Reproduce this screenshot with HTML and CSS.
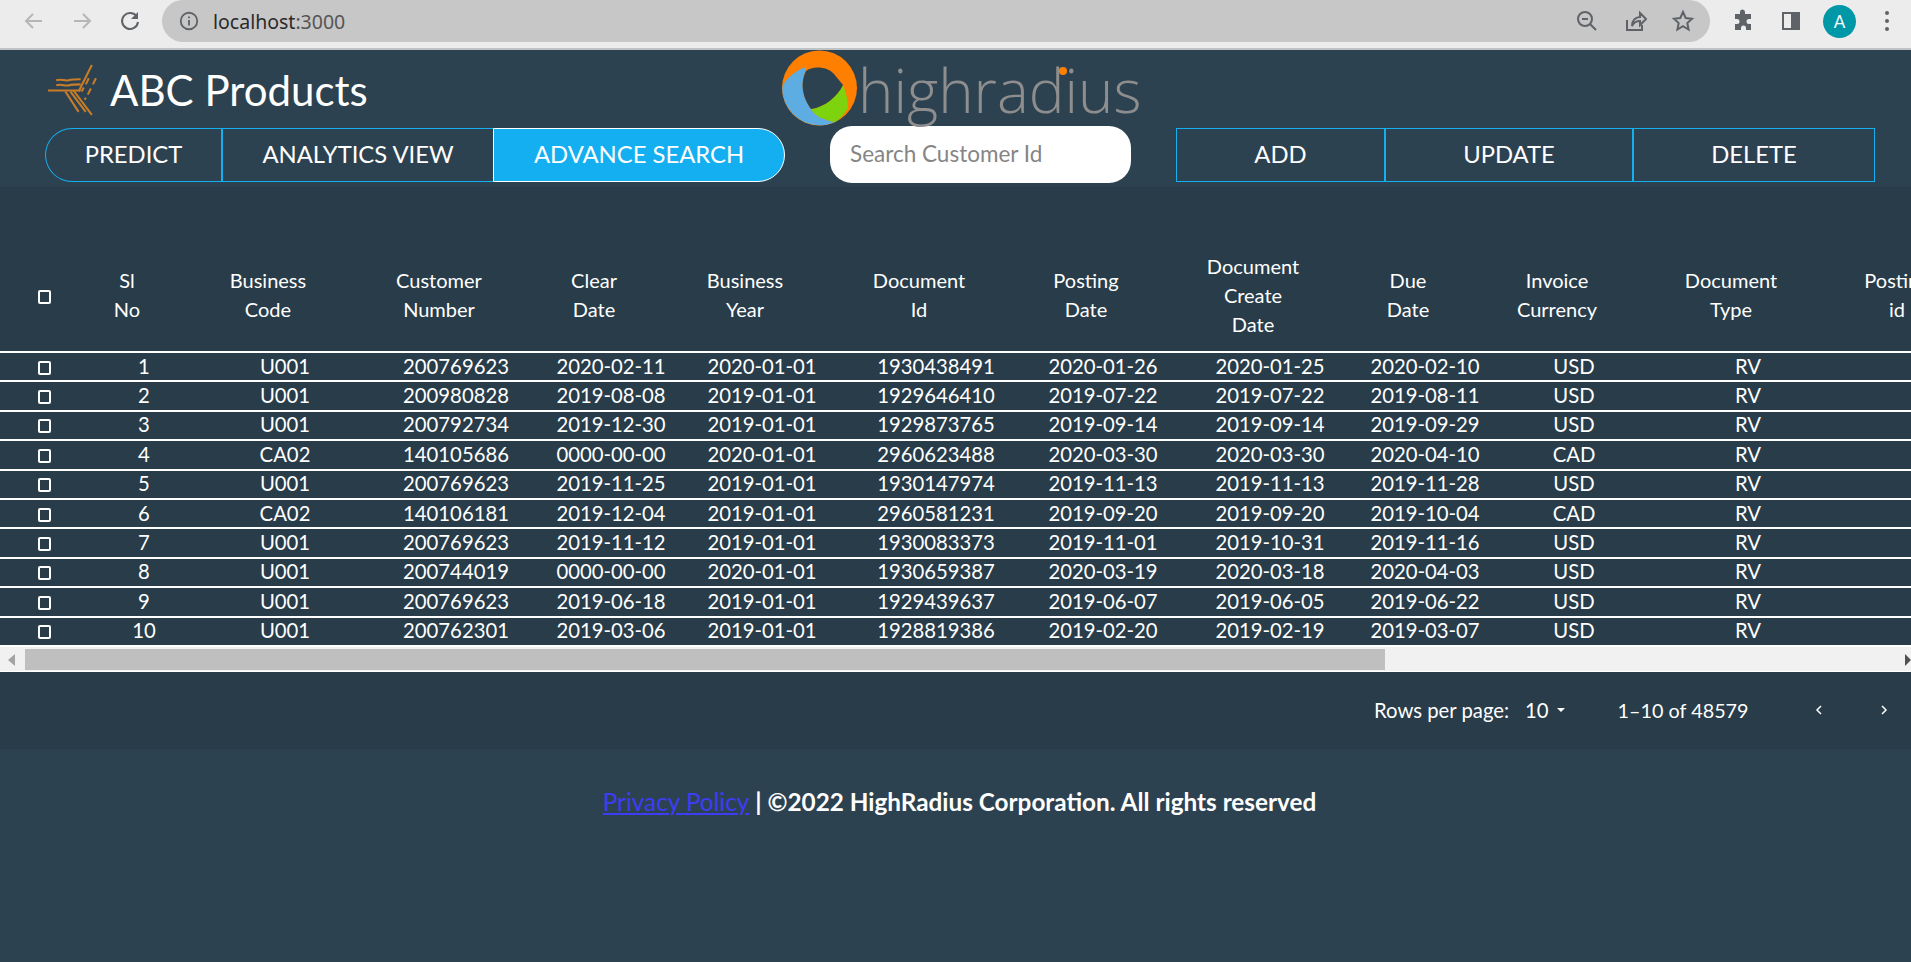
FILE: index.html

```html
<!DOCTYPE html>
<html lang="en">
<head>
  <meta name="viewport" content="width=device-width, initial-scale=1">
  <title>ABC Products</title>
  <link rel="stylesheet" href="styles.css">
</head>
<body>
  <div class="browser-bar">
    <div class="nav-icons">
      <svg class="ico dim" viewBox="0 0 24 24"><path d="M20 12H5M11 5l-7 7 7 7"/></svg>
      <svg class="ico dim" viewBox="0 0 24 24"><path d="M4 12h15M13 5l7 7-7 7"/></svg>
      <svg class="ico" viewBox="0 0 24 24"><path d="M19 8a8 8 0 1 0 1 5"/><path class="solid" d="M20 3v7h-7z"/></svg>
    </div>
    <div class="url-pill">
      <svg class="ico info" viewBox="0 0 24 24"><circle cx="12" cy="12" r="9"/><path d="M12 11v6M12 7v2"/></svg>
      <span class="url">localhost<span class="url-port">:3000</span></span>
      <div class="pill-icons">
        <svg class="ico" viewBox="0 0 24 24"><circle cx="10" cy="10" r="7"/><path d="M15 15l6 6M7 10h6"/></svg>
        <svg class="ico" viewBox="0 0 24 24"><path d="M4 11v10h15v-5"/><path d="M9 17c0-6 4-9 8-9V4l6 6-6 6v-4c-3 0-6 1-8 5z"/></svg>
        <svg class="ico" viewBox="0 0 24 24"><path d="M12 3l2.7 6 6.3.7-4.7 4.3 1.3 6.500L12 17.200l-5.600 3.300 1.300-6.500L3 9.700 9.300 9z"/></svg>
      </div>
    </div>
    <div class="ext-icons">
      <svg class="ico solid-ico" viewBox="0 0 24 24"><path d="M9 3a2.500 2.500 0 0 1 5 0v2h6v5h-2a2.500 2.500 0 0 0 0 5h2v6h-5v-2a2.500 2.500 0 0 0-5 0v2H4v-6h2a2.500 2.500 0 0 0 0-5H4V5h5z"/></svg>
      <svg class="ico" viewBox="0 0 24 24"><path d="M4 4h16v16H4z"/><path class="panel" d="M13 4h7v16h-7z"/></svg>
      <span class="avatar">A</span>
      <span class="dots"><i></i><i></i><i></i></span>
    </div>
  </div>

  <header class="top">
    <div class="brand-row">
      <div class="brand">
        <svg class="brand-mark" viewBox="0 0 48 51">
          <path d="M0 26h32"/>
          <path d="M8 21c5-2 8 1 12 0s7-1 12-1"/>
          <path d="M8 16c5-2 8 1 12 0s7-1 12-1"/>
          <path d="M43 1L30 27"/>
          <path d="M47 14l-3 6M42 24l-3 6M37 33l-1 2"/>
          <path d="M40 14l-3 6M35 23l-2 4"/>
          <path d="M17 27l13 20M22 27l15 20M25 26l18 24"/>
        </svg>
        <span class="brand-name">ABC Products</span>
      </div>
      <div class="hr-logo">
        <svg class="hr-ring" viewBox="0 0 76 76">
          <circle cx="37.500" cy="38" r="37.500" fill="#ff7f00"/>
          <path d="M24 17C10 22 1 32 .3 38A37.500 37.500 0 0 0 53 72C42 70 33 66 29 59 22 50 17 35 24 20z" fill="#5dade2"/>
          <path d="M61 35c3 8 5 15 5 23-4 6-8 11-13 14-11-2-20-6-24-13 14-2 26-12 32-24z" fill="#7ed30f"/>
          <path d="M24 21c6-5 21-5 28 3l9 11c-6 12-18 22-32 24-7-9-12-24-5-38z" fill="#2d4250"/>
        </svg>
        <span class="hr-text">highradius</span>
        <span class="hr-dot"></span>
      </div>
    </div>
    <div class="action-row">
      <div class="tabs">
        <button class="tab tab-predict">PREDICT</button>
        <button class="tab tab-analytics">ANALYTICS VIEW</button>
        <button class="tab tab-advance">ADVANCE SEARCH</button>
      </div>
      <input class="search" type="text" placeholder="Search Customer Id">
      <div class="crud">
        <button class="crud-btn crud-add">ADD</button>
        <button class="crud-btn crud-update">UPDATE</button>
        <button class="crud-btn crud-delete">DELETE</button>
      </div>
    </div>
  </header>

  <main class="grid-area">
    <div class="table-wrap">
      <table class="data-table">
        <colgroup>
          <col class="c-check"><col class="c-sl"><col class="c-biz"><col class="c-cust"><col class="c-clear">
          <col class="c-year"><col class="c-doc"><col class="c-post"><col class="c-create"><col class="c-due">
          <col class="c-cur"><col class="c-type"><col class="c-postid">
        </colgroup>
        <thead>
          <tr>
            <th><input class="cb" type="checkbox"></th>
            <th>Sl<br>No</th>
            <th>Business<br>Code</th>
            <th>Customer<br>Number</th>
            <th>Clear<br>Date</th>
            <th>Business<br>Year</th>
            <th>Document<br>Id</th>
            <th>Posting<br>Date</th>
            <th>Document<br>Create<br>Date</th>
            <th>Due<br>Date</th>
            <th>Invoice<br>Currency</th>
            <th>Document<br>Type</th>
            <th>Posting<br>id</th>
          </tr>
        </thead>
        <tbody>
          <tr><td><input class="cb" type="checkbox"></td><td>1</td><td>U001</td><td>200769623</td><td>2020-02-11</td><td>2020-01-01</td><td>1930438491</td><td>2020-01-26</td><td>2020-01-25</td><td>2020-02-10</td><td>USD</td><td>RV</td><td></td></tr>
          <tr><td><input class="cb" type="checkbox"></td><td>2</td><td>U001</td><td>200980828</td><td>2019-08-08</td><td>2019-01-01</td><td>1929646410</td><td>2019-07-22</td><td>2019-07-22</td><td>2019-08-11</td><td>USD</td><td>RV</td><td></td></tr>
          <tr><td><input class="cb" type="checkbox"></td><td>3</td><td>U001</td><td>200792734</td><td>2019-12-30</td><td>2019-01-01</td><td>1929873765</td><td>2019-09-14</td><td>2019-09-14</td><td>2019-09-29</td><td>USD</td><td>RV</td><td></td></tr>
          <tr><td><input class="cb" type="checkbox"></td><td>4</td><td>CA02</td><td>140105686</td><td>0000-00-00</td><td>2020-01-01</td><td>2960623488</td><td>2020-03-30</td><td>2020-03-30</td><td>2020-04-10</td><td>CAD</td><td>RV</td><td></td></tr>
          <tr><td><input class="cb" type="checkbox"></td><td>5</td><td>U001</td><td>200769623</td><td>2019-11-25</td><td>2019-01-01</td><td>1930147974</td><td>2019-11-13</td><td>2019-11-13</td><td>2019-11-28</td><td>USD</td><td>RV</td><td></td></tr>
          <tr><td><input class="cb" type="checkbox"></td><td>6</td><td>CA02</td><td>140106181</td><td>2019-12-04</td><td>2019-01-01</td><td>2960581231</td><td>2019-09-20</td><td>2019-09-20</td><td>2019-10-04</td><td>CAD</td><td>RV</td><td></td></tr>
          <tr><td><input class="cb" type="checkbox"></td><td>7</td><td>U001</td><td>200769623</td><td>2019-11-12</td><td>2019-01-01</td><td>1930083373</td><td>2019-11-01</td><td>2019-10-31</td><td>2019-11-16</td><td>USD</td><td>RV</td><td></td></tr>
          <tr><td><input class="cb" type="checkbox"></td><td>8</td><td>U001</td><td>200744019</td><td>0000-00-00</td><td>2020-01-01</td><td>1930659387</td><td>2020-03-19</td><td>2020-03-18</td><td>2020-04-03</td><td>USD</td><td>RV</td><td></td></tr>
          <tr><td><input class="cb" type="checkbox"></td><td>9</td><td>U001</td><td>200769623</td><td>2019-06-18</td><td>2019-01-01</td><td>1929439637</td><td>2019-06-07</td><td>2019-06-05</td><td>2019-06-22</td><td>USD</td><td>RV</td><td></td></tr>
          <tr><td><input class="cb" type="checkbox"></td><td>10</td><td>U001</td><td>200762301</td><td>2019-03-06</td><td>2019-01-01</td><td>1928819386</td><td>2019-02-20</td><td>2019-02-19</td><td>2019-03-07</td><td>USD</td><td>RV</td><td></td></tr>
        </tbody>
      </table>
    </div>

    <div class="scrollbar">
      <span class="arrow arrow-left"></span>
      <span class="thumb"></span>
      <span class="arrow arrow-right"></span>
    </div>

    <div class="pagination">
      <span class="rows-label">Rows per page:</span>
      <span class="rows-value">10</span>
      <span class="caret"></span>
      <span class="range">1–10 of 48579</span>
      <svg class="chev chev-prev" viewBox="0 0 10 12"><path d="M7 2L3 6l4 4"/></svg>
      <svg class="chev chev-next" viewBox="0 0 10 12"><path d="M3 2l4 4-4 4"/></svg>
    </div>
  </main>

  <footer class="foot">
    <a href="#">Privacy Policy</a> | ©2022 HighRadius Corporation. All rights reserved
  </footer>
</body>
</html>
```

FILE: styles.css

```css
* {
  box-sizing: border-box;
}
html, body {
  margin: 0;
  height: 100%;
}
body {
  background: #2d4250;
  color: #fff;
  font-family: Lato, "Noto Sans", sans-serif;
  overflow: hidden;
}

/* browser chrome */
.browser-bar {
  height: 50px;
  background: #ececec;
  border-bottom: 2px solid #bfc2c5;
  display: flex;
  align-items: flex-start;
}
.nav-icons {
  width: 162px;
  height: 42px;
  display: flex;
  align-items: center;
  gap: 24px;
  padding-left: 22px;
}
.ico {
  width: 24px;
  height: 24px;
  fill: none;
  stroke: #5f6368;
  stroke-width: 2;
}
.ico.dim {
  stroke: #b4b6b8;
}
.ico .solid {
  fill: #5f6368;
  stroke: none;
}
.ico .panel {
  fill: #5f6368;
}
.solid-ico {
  fill: #5f6368;
  stroke: none;
}
.url-pill {
  width: 1548px;
  height: 42px;
  background: #c7c7c7;
  border-radius: 21px;
  display: flex;
  align-items: center;
  padding-left: 16px;
}
.ico.info {
  width: 22px;
  height: 22px;
}
.url {
  font-family: "Noto Sans", sans-serif;
  font-size: 19.5px;
  color: #2a2a2a;
  margin-left: 13px;
}
.url-port {
  color: #555;
}
.pill-icons {
  margin-left: auto;
  margin-right: 15px;
  display: flex;
  gap: 24px;
}
.ext-icons {
  flex: 1;
  height: 42px;
  display: flex;
  align-items: center;
  padding-left: 21px;
}
.ext-icons .ico + .ico {
  margin-left: 24px;
}
.avatar {
  width: 33px;
  height: 33px;
  margin-left: 20px;
  border-radius: 50%;
  background: #0097a7;
  color: #fff;
  font-size: 17px;
  display: flex;
  align-items: center;
  justify-content: center;
}
.dots {
  margin-left: 29px;
  display: flex;
  flex-direction: column;
  gap: 4px;
}
.dots i {
  width: 4px;
  height: 4px;
  border-radius: 50%;
  background: #5f6368;
}

/* header */
.top {
  height: 137px;
  background: #2d4250;
}
.brand-row {
  height: 76px;
  display: flex;
  align-items: flex-start;
}
.brand {
  width: 782px;
  padding: 14px 0 0 48px;
  display: flex;
  align-items: center;
  gap: 13px;
}
.brand-mark {
  width: 49px;
  height: 52px;
  fill: none;
  stroke: #c97d28;
  stroke-width: 2;
}
.brand-name {
  font-size: 42px;
  line-height: 52px;
}
.hr-logo {
  position: relative;
  display: flex;
  align-items: flex-start;
}
.hr-ring {
  width: 76px;
  height: 76px;
  flex: none;
}
.hr-text {
  margin: -2px 0 0;
  font-family: "Open Sans", sans-serif;
  font-weight: 300;
  font-size: 60px;
  line-height: 84px;
  color: #8e8e8e;
}
.hr-dot {
  position: absolute;
  left: 277px;
  top: 17px;
  width: 8px;
  height: 8px;
  border-radius: 50%;
  background: #ff7f00;
}
.action-row {
  display: flex;
  align-items: center;
  padding-left: 45px;
  height: 57px;
}
.tabs, .crud {
  display: flex;
  height: 54px;
}
.tab, .crud-btn {
  background: transparent;
  color: #fff;
  font-family: Lato, sans-serif;
  font-size: 23.8px;
  border: 1px solid #14aff1;
  padding: 0 0 2px;
}
.tab-predict {
  width: 178px;
  border-radius: 27px 0 0 27px;
}
.tab-analytics {
  width: 270px;
  border-left: 0;
  border-right: 0;
}
.tab-advance {
  width: 292px;
  border: 1px solid #fff;
  border-radius: 0 27px 27px 0;
  background: #14aff1;
}
.tab-predict, .crud-add, .crud-update {
  border-right-width: 2px;
}
.search {
  width: 301px;
  height: 57px;
  margin-left: 45px;
  border: 0;
  border-radius: 22px;
  background: #fff;
  padding: 0 20px 2px;
  font-family: Lato, sans-serif;
  font-size: 22.5px;
}
.search::placeholder {
  color: #858585;
  opacity: 1;
}
.crud {
  margin-left: 45px;
}
.crud-add {
  width: 210px;
}
.crud-update {
  width: 248px;
  border-left: 0;
}
.crud-delete {
  width: 241px;
  border-left: 0;
}

/* table */
.grid-area {
  height: 562px;
  background: #283c4a;
  padding-top: 49px;
}
.table-wrap {
  overflow: hidden;
}
.data-table {
  width: 1992px;
  table-layout: fixed;
  border-collapse: separate;
  border-spacing: 0;
}
.c-check { width: 88px; }
.c-sl { width: 112px; }
.c-biz { width: 170px; }
.c-cust { width: 172px; }
.c-clear { width: 138px; }
.c-year { width: 164px; }
.c-doc { width: 184px; }
.c-post { width: 150px; }
.c-create { width: 184px; }
.c-due { width: 126px; }
.c-cur { width: 172px; }
.c-type { width: 176px; }
.c-postid { width: 156px; }
.data-table th {
  height: 117px;
  padding: 3px 34px 0 0;
  font-size: 20px;
  font-weight: 400;
  line-height: 29px;
  text-align: center;
  white-space: nowrap;
  border-bottom: 2px solid #fff;
}
.data-table th:first-child {
  padding: 6px 0 0;
}
.data-table td {
  height: 29.4px;
  padding: 0 0 2px;
  font-size: 20.3px;
  line-height: 24px;
  text-align: center;
  white-space: nowrap;
  border-bottom: 2px solid #fff;
}
.data-table td:first-child {
  padding: 2px 0 0;
}
.cb {
  appearance: none;
  display: block;
  width: 13px;
  height: 14px;
  margin: 0 auto;
  border: 2px solid #fff;
  border-radius: 2px;
  background: transparent;
}

.scrollbar {
  height: 25px;
  background: #f1f1f1;
  border-bottom: 1px solid #fff;
  display: flex;
  align-items: center;
  padding: 1px 0 0 25px;
  position: relative;
}
.thumb {
  width: 1360px;
  height: 21px;
  background: #bfbfbf;
}
.arrow {
  position: absolute;
  top: 7px;
  width: 0;
  height: 0;
  border-top: 6px solid transparent;
  border-bottom: 6px solid transparent;
}
.arrow-left {
  left: 8px;
  border-right: 7px solid #a3a3a3;
}
.arrow-right {
  right: 0;
  border-left: 6px solid #505050;
}

.pagination {
  height: 77px;
  display: flex;
  align-items: center;
  padding-left: 1374px;
  font-size: 20.3px;
}
.rows-value {
  margin-left: 16px;
}
.caret {
  margin-left: 8px;
  border-left: 4px solid transparent;
  border-right: 4px solid transparent;
  border-top: 4px solid #fff;
}
.range {
  margin-left: 53px;
  font-size: 19.8px;
}
.chev {
  width: 10px;
  height: 12px;
  fill: none;
  stroke: #fff;
  stroke-width: 1.5;
}
.chev-prev {
  margin-left: 65px;
}
.chev-next {
  margin-left: 55px;
}

/* footer */
.foot {
  padding: 38px 0 0 8px;
  text-align: center;
  font-size: 24.3px;
  font-weight: 700;
  line-height: 30px;
}
.foot a {
  color: #3d3df5;
  font-weight: 400;
}
```
